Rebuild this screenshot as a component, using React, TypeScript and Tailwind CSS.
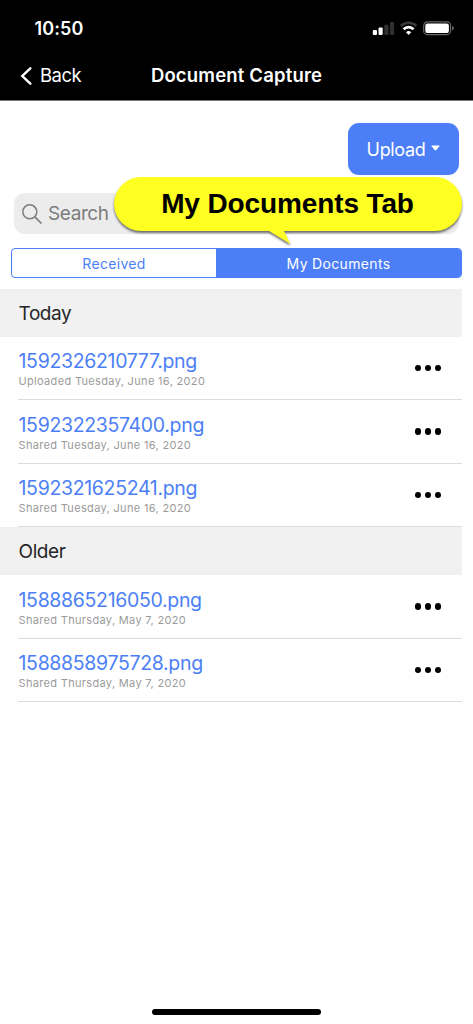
type Doc = {
    name: string;
    detail: string;
};

const sections: { title: string; docs: Doc[] }[] = [
    {
        title: "Today",
        docs: [
            { name: "1592326210777.png", detail: "Uploaded Tuesday, June 16, 2020" },
            { name: "1592322357400.png", detail: "Shared Tuesday, June 16, 2020" },
            { name: "1592321625241.png", detail: "Shared Tuesday, June 16, 2020" },
        ],
    },
    {
        title: "Older",
        docs: [
            { name: "1588865216050.png", detail: "Shared Thursday, May 7, 2020" },
            { name: "1588858975728.png", detail: "Shared Thursday, May 7, 2020" },
        ],
    },
];

function StatusIcons() {
    return (
        <svg width="84" height="16" viewBox="0 0 84 16" fill="none">
            {/* signal */}
            <rect x="0.8" y="10" width="4.2" height="5" rx="1" fill="#fff" />
            <rect x="6.5" y="7.5" width="4.2" height="7.5" rx="1" fill="#fff" />
            <rect x="12.3" y="4.7" width="4.2" height="10.3" rx="1" fill="#303030" />
            <rect x="18" y="2" width="4.2" height="13" rx="1" fill="#303030" />
            {/* wifi */}
            <path d="M28.8 6a11 11 0 0 1 15.600 0" stroke="#3a3a3a" strokeWidth="2.700" />
            <path d="M31.600 9.300a7 7 0 0 1 10 0" stroke="#fff" strokeWidth="2.700" />
            <path d="M36.600 14.900l-2.600-2.700a3.800 3.800 0 0 1 5.200 0z" fill="#fff" />
            {/* battery */}
            <rect x="51.700" y="1.900" width="26.800" height="12.800" rx="3.800" stroke="#666" strokeWidth="1.200" />
            <rect x="53.300" y="3.500" width="23.600" height="9.600" rx="2.200" fill="#fff" />
            <path d="M80.200 6v4.600c1-.4 1.500-1.200 1.500-2.300S81.200 6.400 80.200 6z" fill="#777" />
        </svg>
    );
}

function Header() {
    return (
        <header className="h-[101px] border-b border-[#777] bg-black text-white">
            <div className="flex h-[52px] items-center justify-between pt-1 pr-[17px] pl-[34.5px]">
                <span className="text-[18px] font-semibold tracking-[0.1px]">10:50</span>
                <StatusIcons />
            </div>
            <div className="grid h-12 grid-cols-[1fr_auto_1fr] items-center px-5">
                <button className="flex items-center gap-2 text-[18.5px] tracking-[-0.5px]">
                    <svg width="12" height="18" viewBox="0 0 12 18" fill="none">
                        <path d="M10.300 1.300L2.300 9l8 7.700" stroke="currentColor" strokeWidth="2.400" strokeLinecap="round" />
                    </svg>
                    Back
                </button>
                <h1 className="text-[18.5px] font-semibold tracking-[0.18px]">Document Capture</h1>
            </div>
        </header>
    );
}

function Callout() {
    return (
        <div className="absolute -top-4 left-[100px] h-[68px] w-[349px]">
            <svg
                className="absolute inset-0 overflow-visible drop-shadow-[0_2px_1px_rgba(0,0,0,0.55)]"
                width="349"
                height="68"
                viewBox="0 0 349 68"
            >
                <path d="M27 0h294a27 27 0 0 1 0 54H170l6.500 13L155 54H27a27 27 0 0 1 0-54z" fill="#ffff21" />
            </svg>
            <p className="relative flex h-[54px] items-center justify-center pr-[2px] font-['Liberation_Sans',sans-serif] text-[28px] font-bold tracking-[-0.12px] text-black">
                My Documents Tab
            </p>
        </div>
    );
}

function Row({ doc }: { doc: Doc }) {
    return (
        <li className="ml-[18px] flex h-[63.4px] justify-between border-b border-[#dcdcdc] pr-[21px]">
            <div className="pt-[12.4px] pl-[0.5px]">
                <p className="text-[19.5px] leading-6 tracking-[-0.33px] text-[#4c7ff7]">{doc.name}</p>
                <p className="text-[11px] leading-4 tracking-[0.33px] text-[#9b9b9b]">{doc.detail}</p>
            </div>
            <button className="flex items-center gap-[3.4px]" aria-label="More">
                <span className="size-[6.4px] rounded-full bg-black" />
                <span className="size-[6.4px] rounded-full bg-black" />
                <span className="size-[6.4px] rounded-full bg-black" />
            </button>
        </li>
    );
}

export default function App() {
    return (
        <div className="flex h-[1024px] w-[473px] flex-col bg-white font-[Inter,sans-serif]">
            <Header />
            <main className="flex flex-1 flex-col pr-[11px]">
                <div className="flex justify-end pt-[22px] pr-[3px]">
                    <button className="flex h-[52px] w-[111px] items-center justify-center gap-[6px] rounded-[11px] bg-[#4b7ef7] text-[18px] tracking-[-0.35px] text-white">
                        Upload
                        <svg className="-mt-[2px]" width="9" height="6" viewBox="0 0 9 6">
                            <path d="M1 .5h7a.5.5 0 0 1 .4.8L5 5.300a.7.7 0 0 1-1 0L.6 1.300A.5.5 0 0 1 1 .5z" fill="currentColor" />
                        </svg>
                    </button>
                </div>
                <div className="relative mt-[18px] mr-[3px] ml-[14px] flex h-[41px] items-center gap-[6px] rounded-[11px] bg-[#ececec] pl-2 text-[#7c7c7c]">
                    <svg width="20" height="20" viewBox="0 0 20 20" fill="none" stroke="currentColor">
                        <circle cx="7.8" cy="7.8" r="7" strokeWidth="1.5" />
                        <path d="M12.800 12.800l6.200 6.200" strokeWidth="1.700" strokeLinecap="round" />
                    </svg>
                    <span className="pt-[2px] text-[19px] tracking-[-0.4px]">Search</span>
                    <Callout />
                </div>
                <div className="mt-[14px] ml-[11px] flex h-[30px] overflow-hidden rounded-[4px] border border-[#4b7ef7] text-[14px] tracking-[0.33px]">
                    <button className="w-[204px] text-[#4b7ef7]">Received</button>
                    <button className="flex-1 bg-[#4b7ef7] text-white">My Documents</button>
                </div>
                <div className="mt-[11px]">
                    {sections.map((section) => (
                        <section key={section.title}>
                            <h2 className="flex h-12 items-center bg-[#f1f1f1] pt-[2px] pl-[18.5px] text-[19px] tracking-[-0.4px] text-[#262626]">
                                {section.title}
                            </h2>
                            <ul>
                                {section.docs.map((doc) => (
                                    <Row key={doc.name} doc={doc} />
                                ))}
                            </ul>
                        </section>
                    ))}
                </div>
            </main>
            <footer className="flex justify-center pb-[9px]">
                <div className="h-[6px] w-[169px] rounded-full bg-black" />
            </footer>
        </div>
    );
}
